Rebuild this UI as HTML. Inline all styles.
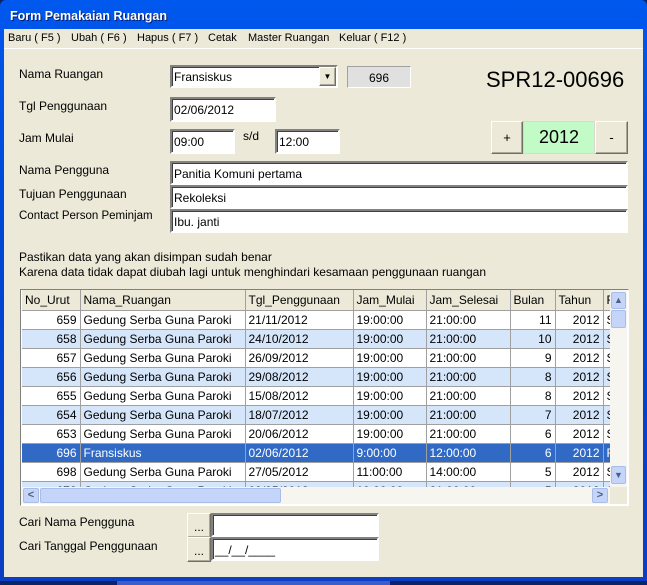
<!DOCTYPE html>
<html><head><style>
*{box-sizing:border-box;margin:0;padding:0}
body{width:647px;height:585px;overflow:hidden;background:#0a246a;font-family:"Liberation Sans",sans-serif;font-size:12px;color:#000;position:relative}
.a{position:absolute}
.win{left:0;top:0;width:647px;height:581px;background:linear-gradient(#0058ee,#0046d5 40%,#0a3fc4);border-radius:6px 6px 0 0}
.title{left:10px;top:9px;color:#fff;font-weight:bold;font-size:12.5px;text-shadow:1px 1px #0a1f6a}
.client{left:4px;top:29px;width:639px;height:548px;background:#ece9d8}
.menu{left:4px;top:29px;width:639px;height:20px;border-bottom:1px solid #fff}
.menu span{position:absolute;top:3px;font-size:11px}
.lbl{font-size:12px}
.in{background:#fff;border:2px solid;border-color:#828282 #fff #fff #828282;box-shadow:inset 1px 1px #404040;font-size:12px;padding:4px 2px 0}
.btn{background:#ece9d8;border:1px solid;border-color:#fff #716f64 #716f64 #fff;box-shadow:inset -1px -1px #aca899;text-align:center}
table{border-collapse:collapse;table-layout:fixed;font-size:12px}
td{border-right:1px solid #a0a0a0;border-bottom:1px solid #a0a0a0;height:19px;padding:0 3px;white-space:nowrap;overflow:hidden}
tr.h td{background:#ece9d8;border-color:#a0a0a0;height:20px}
tr.b td{background:#d6e6fa}
tr.s td{background:#316ac5;color:#fff}
.r{text-align:right}
</style></head><body>
<div class="a win"></div>
<div class="a title">Form Pemakaian Ruangan</div>
<div class="a client"></div>
<div class="a menu">
<span style="left:4px">Baru ( F5 )</span><span style="left:67px">Ubah ( F6 )</span><span style="left:133px">Hapus ( F7 )</span><span style="left:204px">Cetak</span><span style="left:244px">Master Ruangan</span><span style="left:335px">Keluar ( F12 )</span>
</div>

<div class="a lbl" style="left:19px;top:67px">Nama Ruangan</div>
<div class="a lbl" style="left:19px;top:99px">Tgl Penggunaan</div>
<div class="a lbl" style="left:19px;top:131px">Jam Mulai</div>
<div class="a lbl" style="left:19px;top:163px">Nama Pengguna</div>
<div class="a lbl" style="left:19px;top:187px">Tujuan Penggunaan</div>
<div class="a lbl" style="left:19px;top:210px;font-size:11.5px">Contact Person Peminjam</div>

<div class="a in" style="left:170px;top:65px;width:168px;height:23px;padding-top:3px">Fransiskus</div>
<div class="a btn" style="left:319px;top:67px;width:17px;height:19px;font-size:8px;line-height:17px">▼</div>
<div class="a" style="left:347px;top:66px;width:64px;height:22px;background:#e0e0e0;border:1px solid;border-color:#a0a0a0 #fff #fff #a0a0a0;text-align:right;padding:4px 21px 0 0">696</div>
<div class="a" style="left:486px;top:67px;font-size:22px">SPR12-00696</div>

<div class="a in" style="left:170px;top:97px;width:106px;height:25px">02/06/2012</div>
<div class="a in" style="left:170px;top:129px;width:65px;height:25px">09:00</div>
<div class="a lbl" style="left:243px;top:129px">s/d</div>
<div class="a in" style="left:275px;top:129px;width:65px;height:25px">12:00</div>

<div class="a btn" style="left:491px;top:121px;width:32px;height:33px;line-height:31px;font-size:13px">+</div>
<div class="a" style="left:523px;top:121px;width:72px;height:33px;background:#c3fbc7;border:1px solid #d8d8d0;text-align:center;line-height:30px;font-size:18px">2012</div>
<div class="a btn" style="left:595px;top:121px;width:33px;height:33px;line-height:31px;font-size:13px">-</div>

<div class="a in" style="left:170px;top:161px;width:458px;height:24px">Panitia Komuni pertama</div>
<div class="a in" style="left:170px;top:185px;width:458px;height:24px">Rekoleksi</div>
<div class="a in" style="left:170px;top:209px;width:458px;height:24px">Ibu. janti</div>

<div class="a lbl" style="left:19px;top:250px">Pastikan data yang akan disimpan sudah benar</div>
<div class="a lbl" style="left:19px;top:265px">Karena data tidak dapat diubah lagi untuk menghindari kesamaan penggunaan ruangan</div>

<div class="a" style="left:20px;top:289px;width:609px;height:217px;border:1px solid;border-color:#808080 #fff #fff #808080;background:#fff;overflow:hidden">
<div class="a" style="left:1px;top:0;width:588px;height:197px;overflow:hidden">
<table style="width:610px">
<colgroup><col style="width:58px"><col style="width:165px"><col style="width:108px"><col style="width:73px"><col style="width:84px"><col style="width:45px"><col style="width:48px"><col style="width:29px"></colgroup>
<tr class="h"><td>No_Urut</td><td>Nama_Ruangan</td><td>Tgl_Penggunaan</td><td>Jam_Mulai</td><td>Jam_Selesai</td><td>Bulan</td><td>Tahun</td><td>F</td></tr>
<tr><td class="r">659</td><td>Gedung Serba Guna Paroki</td><td>21/11/2012</td><td>19:00:00</td><td>21:00:00</td><td class="r">11</td><td class="r">2012</td><td>S</td></tr>
<tr class="b"><td class="r">658</td><td>Gedung Serba Guna Paroki</td><td>24/10/2012</td><td>19:00:00</td><td>21:00:00</td><td class="r">10</td><td class="r">2012</td><td>S</td></tr>
<tr><td class="r">657</td><td>Gedung Serba Guna Paroki</td><td>26/09/2012</td><td>19:00:00</td><td>21:00:00</td><td class="r">9</td><td class="r">2012</td><td>S</td></tr>
<tr class="b"><td class="r">656</td><td>Gedung Serba Guna Paroki</td><td>29/08/2012</td><td>19:00:00</td><td>21:00:00</td><td class="r">8</td><td class="r">2012</td><td>S</td></tr>
<tr><td class="r">655</td><td>Gedung Serba Guna Paroki</td><td>15/08/2012</td><td>19:00:00</td><td>21:00:00</td><td class="r">8</td><td class="r">2012</td><td>S</td></tr>
<tr class="b"><td class="r">654</td><td>Gedung Serba Guna Paroki</td><td>18/07/2012</td><td>19:00:00</td><td>21:00:00</td><td class="r">7</td><td class="r">2012</td><td>S</td></tr>
<tr><td class="r">653</td><td>Gedung Serba Guna Paroki</td><td>20/06/2012</td><td>19:00:00</td><td>21:00:00</td><td class="r">6</td><td class="r">2012</td><td>S</td></tr>
<tr class="s"><td class="r">696</td><td>Fransiskus</td><td>02/06/2012</td><td>9:00:00</td><td>12:00:00</td><td class="r">6</td><td class="r">2012</td><td>F</td></tr>
<tr><td class="r">698</td><td>Gedung Serba Guna Paroki</td><td>27/05/2012</td><td>11:00:00</td><td>14:00:00</td><td class="r">5</td><td class="r">2012</td><td>S</td></tr>
<tr class="b"><td class="r">678</td><td>Gedung Serba Guna Paroki</td><td>09/05/2012</td><td>19:00:00</td><td>21:00:00</td><td class="r">5</td><td class="r">2012</td><td>S</td></tr>
</table></div>
<div class="a" style="left:589px;top:0;width:17px;height:197px;background:#f6f5ef"></div>
<div class="a" style="left:590px;top:2px;width:15px;height:17px;background:#c5d5fa;border:1px solid #a8bde8;border-radius:2px;color:#4d6185;font-size:9px;text-align:center;line-height:15px">▲</div>
<div class="a" style="left:590px;top:20px;width:15px;height:18px;background:#c5d5fa;border:1px solid #a8bde8;border-radius:2px"></div>
<div class="a" style="left:590px;top:176px;width:15px;height:18px;background:#c5d5fa;border:1px solid #a8bde8;border-radius:2px;color:#4d6185;font-size:9px;text-align:center;line-height:16px">▼</div>
<div class="a" style="left:0;top:197px;width:589px;height:17px;background:#f6f5ef"></div>
<div class="a" style="left:2px;top:198px;width:16px;height:15px;background:#c5d5fa;border:1px solid #a8bde8;border-radius:2px;color:#4d6185;font-size:11px;font-weight:bold;text-align:center;line-height:13px">&lt;</div>
<div class="a" style="left:19px;top:198px;width:241px;height:15px;background:#c5d5fa;border:1px solid #a8bde8;border-radius:2px"></div>
<div class="a" style="left:571px;top:198px;width:16px;height:15px;background:#c5d5fa;border:1px solid #a8bde8;border-radius:2px;color:#4d6185;font-size:11px;font-weight:bold;text-align:center;line-height:13px">&gt;</div>
<div class="a" style="left:589px;top:197px;width:17px;height:17px;background:#ece9d8"></div>
</div>

<div class="a lbl" style="left:19px;top:515px">Cari Nama Pengguna</div>
<div class="a lbl" style="left:19px;top:539px">Cari Tanggal Penggunaan</div>
<div class="a btn" style="left:187px;top:513px;width:24px;height:25px;line-height:26px">...</div>
<div class="a btn" style="left:187px;top:537px;width:24px;height:25px;line-height:26px">...</div>
<div class="a in" style="left:211px;top:513px;width:168px;height:24px"></div>
<div class="a in" style="left:211px;top:537px;width:168px;height:24px">__/__/____</div>
<div class="a" style="left:117px;top:581px;width:273px;height:4px;background:#3a5fcd"></div>
</body></html>
